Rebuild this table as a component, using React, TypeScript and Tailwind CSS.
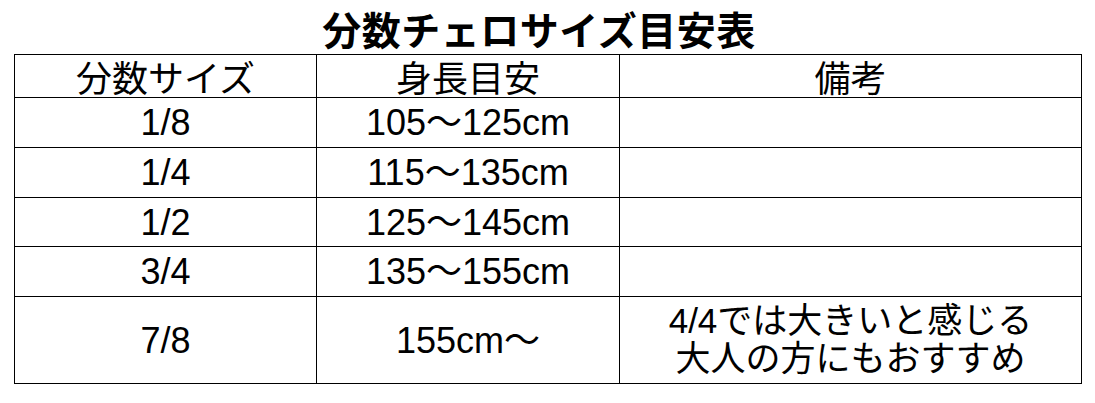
import React from "react";

const rows: { size: string; height: string; note?: string[] }[] = [
  { size: "1/8", height: "105～125cm" },
  { size: "1/4", height: "115～135cm" },
  { size: "1/2", height: "125～145cm" },
  { size: "3/4", height: "135～155cm" },
  { size: "7/8", height: "155cm～", note: ["4/4では大きいと感じる", "大人の方にもおすすめ"] },
];

const heights = ["h-[50px]", "h-[50px]", "h-[49px]", "h-[50px]", "h-[87px]"];

export default function App() {
  const font = "font-['Liberation_Sans','Noto_Sans_CJK_JP',sans-serif]";
  const base = "border-r border-b border-black flex items-center justify-center text-center text-black";
  const cell = `${base} text-[36px] leading-[37px]`;
  return (
    <div className={`w-[1095px] h-[403px] bg-white ${font}`}>
      <div className="h-[54px] flex items-center justify-center pt-[2px] pr-[17px]">
        <h1 className="font-['Noto_Sans_CJK_JP',sans-serif] font-bold text-[39px] leading-[40px] text-black tracking-[0.5px]">
          分数チェロサイズ目安表
        </h1>
      </div>
      <div className="ml-[14px] w-[1068px] border-l border-t border-black grid grid-cols-[302px_303px_462px]">
        <div className={`${cell} h-[43px] font-['Noto_Sans_CJK_JP',sans-serif]`}>分数サイズ</div>
        <div className={`${cell} h-[43px] font-['Noto_Sans_CJK_JP',sans-serif]`}>身長目安</div>
        <div className={`${cell} h-[43px] font-['Noto_Sans_CJK_JP',sans-serif]`}>備考</div>
        {rows.map((r, i) => (
          <React.Fragment key={r.size}>
            <div className={`${cell} ${heights[i]}`}>{r.size}</div>
            <div className={`${cell} ${heights[i]}`}>{r.height}</div>
            <div className={`${base} ${heights[i]} flex-col text-[35px] leading-[38px]`}>
              {r.note?.map((n) => (
                <span key={n} className="block">{n}</span>
              ))}
            </div>
          </React.Fragment>
        ))}
      </div>
    </div>
  );
}
